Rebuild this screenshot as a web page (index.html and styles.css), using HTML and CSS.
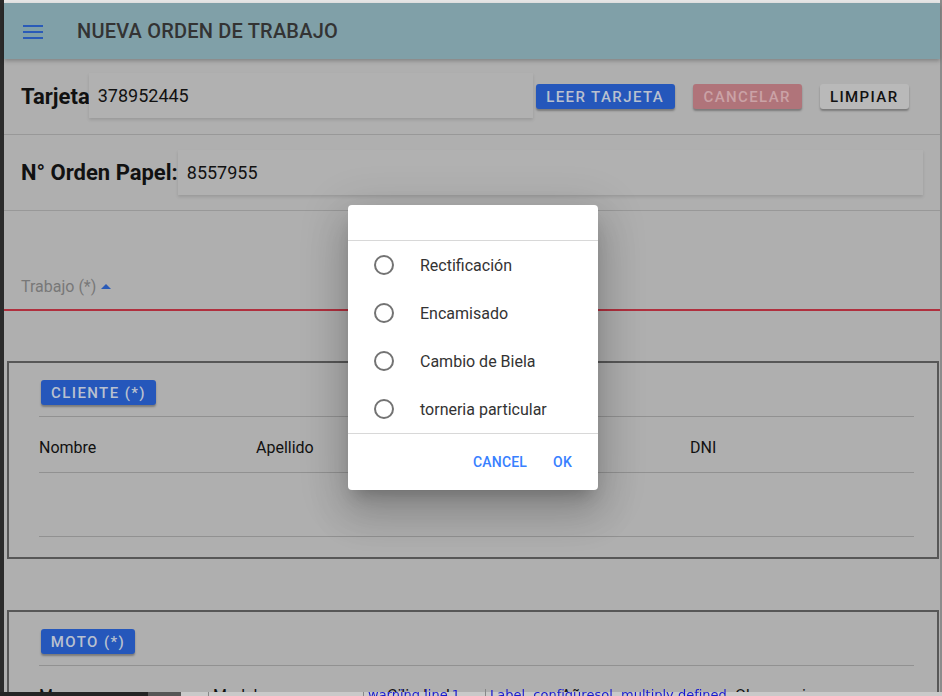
FILE: index.html
```html
<!DOCTYPE html>
<html lang="es">
<head>
<meta charset="utf-8">
<title>Nueva orden de trabajo</title>
<link rel="stylesheet" href="styles.css">
</head>
<body>
<div class="frame">
  <div class="edge"></div>
  <div class="app">
    <div class="topline"></div>
    <header class="toolbar">
      <svg class="menu" width="20" height="14" viewBox="0 0 20 14"><rect x="0" y="0" width="20" height="2"/><rect x="0" y="6" width="20" height="2"/><rect x="0" y="12" width="20" height="2"/></svg>
      <h1 class="title">NUEVA ORDEN DE TRABAJO</h1>
    </header>
    <section class="row row-tarjeta">
      <span class="label">Tarjeta</span>
      <div class="input input-tarjeta">378952445</div>
      <div class="actions">
        <button class="btn btn-blue">LEER TARJETA</button>
        <button class="btn btn-pink">CANCELAR</button>
        <button class="btn btn-light">LIMPIAR</button>
      </div>
    </section>
    <section class="row row-orden">
      <span class="label">N° Orden Papel:</span>
      <div class="input input-orden">8557955</div>
    </section>
    <section class="select-item">
      <span class="select-label">Trabajo (*)</span>
      <span class="caret"></span>
    </section>
    <section class="card card-cliente">
      <button class="btn btn-blue btn-card">CLIENTE (*)</button>
      <div class="grid grid-4 head">
        <span>Nombre</span><span>Apellido</span><span>Teléfono</span><span>DNI</span>
      </div>
      <div class="grid-empty"></div>
    </section>
    <section class="card card-moto">
      <button class="btn btn-blue btn-card">MOTO (*)</button>
      <div class="grid grid-5 head">
        <span>Marca</span><span>Modelo</span><span>Cilindrada</span><span>Año</span><span>Observaciones</span>
      </div>
    </section>
  </div>
</div>

<div class="alert">
  <div class="alert-head"></div>
  <div class="alert-list">
    <div class="radio-item"><span class="radio"></span><span class="radio-label">Rectificación</span></div>
    <div class="radio-item"><span class="radio"></span><span class="radio-label">Encamisado</span></div>
    <div class="radio-item"><span class="radio"></span><span class="radio-label">Cambio de Biela</span></div>
    <div class="radio-item"><span class="radio"></span><span class="radio-label">torneria particular</span></div>
  </div>
  <div class="alert-buttons">
    <span class="alert-btn">CANCEL</span>
    <span class="alert-btn">OK</span>
  </div>
</div>

<div class="statusbar">
  <span class="sb sb-dark"></span>
  <span class="sb sb-mid"></span>
  <span class="sb sb-a"></span>
  <span class="sb sb-b"></span>
  <span class="sb sb-warn">warning line 1</span>
  <span class="sb sb-label">Label. configuresol. multiply defined</span>
</div>
</body>
</html>
```

FILE: styles.css
```css
* { box-sizing: border-box; }
html, body { margin: 0; padding: 0; }
body {
  width: 942px;
  height: 696px;
  overflow: hidden;
  background: #afafaf;
  font-family: Roboto, "Noto Sans", sans-serif;
  color: #111;
}
.frame { display: flex; height: 696px; }
.edge { width: 4px; background: #2b2b2b; flex: none; }
.app {
  width: 938px;
  border-right: 2px solid #8c8c8c;
  display: flex;
  flex-direction: column;
}
.topline { height: 3px; background: #e6e6e6; flex: none; }
.toolbar {
  height: 56px;
  flex: none;
  background: #80a0a8;
  display: flex;
  align-items: center;
  box-shadow: 0 2px 4px rgba(0,0,0,0.25);
  position: relative;
  z-index: 1;
}
.menu { fill: #2a5bb8; margin-left: 19px; margin-top: 1px; }
.title {
  margin: 0 0 0 34px;
  font-size: 20px;
  font-weight: 500;
  letter-spacing: 0.2px;
  color: #333;
}
.row {
  display: flex;
  align-items: center;
  border-bottom: 1px solid #989898;
  height: 76px;
  flex: none;
}
.row-tarjeta { padding: 0 0 0 17px; }
.row-tarjeta .input { margin-bottom: 2px; }
.row-orden { padding: 0 17px 0 17px; }
.label { font-size: 22px; font-weight: 700; color: #111; }
.input {
  height: 45px;
  display: flex;
  align-items: center;
  padding-left: 9px;
  font-size: 18px;
  color: #111;
  background: #b1b1b1;
  box-shadow: 0 2px 3px rgba(0,0,0,0.12);
}
.input-tarjeta { width: 444px; margin-left: -1px; }
.input-orden { flex: 1; margin-left: 0; }
.actions { display: flex; gap: 18px; margin-left: 3px; }
.btn {
  font-family: Roboto, sans-serif;
  font-size: 15px;
  font-weight: 500;
  letter-spacing: 1.4px;
  height: 25px;
  border: none;
  border-radius: 3px;
  padding: 0;
  box-shadow: 0 2px 2px rgba(0,0,0,0.3);
}
.btn-blue { background: #2557bb; color: #b9c1cf; width: 139px; }
.btn-pink { background: #b0747a; color: #caa2a6; width: 109px; }
.btn-light { background: #b9b9b9; color: #111; width: 89px; }
.select-item {
  height: 100px;
  flex: none;
  display: flex;
  align-items: flex-end;
  padding: 0 0 13px 17px;
  border-bottom: 2px solid #b0303e;
}
.select-label { font-size: 16px; color: #787878; }
.caret {
  width: 0; height: 0;
  border-left: 5px solid transparent;
  border-right: 5px solid transparent;
  border-bottom: 5px solid #2a5bb8;
  margin: 0 0 7px 5px;
}
.card {
  margin: 0 1px 0 3px;
  border: 2px solid #575757;
  padding: 17px 23px 0 30px;
}
.card-cliente { margin-top: 50px; height: 198px; flex: none; }
.card-moto { margin-top: 51px; flex: 1; border-bottom: none; }
.btn-card { margin-left: 2px; height: 25px; display: block; }
.card-cliente .btn-card { width: 115px; }
.card-moto .btn-card { width: 94px; }
.grid { display: grid; border-top: 1px solid #919191; margin-top: 11px; font-size: 16px; }
.grid-4 { grid-template-columns: repeat(4, 217px); height: 57px; align-items: start; padding-top: 21px; border-bottom: 1px solid #919191; }
.grid-5 { grid-template-columns: repeat(5, 174px); padding-top: 20px; }
.grid-empty { height: 64px; border-bottom: 1px solid #919191; }

.alert {
  position: absolute;
  left: 348px;
  top: 205px;
  width: 250px;
  height: 285px;
  background: #fff;
  border-radius: 4px;
  box-shadow: 0 11px 15px -7px rgba(0,0,0,0.2), 0 24px 38px 3px rgba(0,0,0,0.14), 0 9px 46px 8px rgba(0,0,0,0.12);
  display: flex;
  flex-direction: column;
}
.alert-head { height: 36px; border-bottom: 1px solid #d8d8d8; }
.alert-list { border-bottom: 1px solid #d8d8d8; }
.radio-item { height: 48px; display: flex; align-items: center; padding-left: 26px; }
.radio {
  width: 20px; height: 20px;
  border: 2px solid #737373;
  border-radius: 50%;
  flex: none;
}
.radio-label { margin-left: 26px; font-size: 16px; color: #333; }
.alert-buttons {
  flex: 1;
  display: flex;
  justify-content: flex-end;
  align-items: center;
  gap: 26px;
  padding-right: 26px;
}
.alert-btn {
  font-size: 14px;
  font-weight: 500;
  color: #3880ff;
  letter-spacing: 0.2px;
}

.statusbar {
  position: fixed;
  left: 0; bottom: 0;
  width: 942px;
  height: 4px;
  background: #c9c9c9;
  display: flex;
  overflow: visible;
}
.sb { display: block; height: 4px; flex: none; }
.sb-dark { width: 148px; background: #242424; }
.sb-mid { width: 33px; background: #565656; }
.sb-a { width: 28px; border-right: 1px solid #888; }
.sb-b { width: 155px; border-right: 1px solid #888; }
.sb-warn, .sb-label {
  overflow: hidden;
  font-family: "DejaVu Sans", sans-serif;
  font-size: 13px;
  line-height: 12px;
  color: #1a1ad0;
  padding-left: 4px;
  position: relative;
  top: -3px;
  height: 7px;
}
.sb-warn { width: 122px; border-right: 1px solid #888; }
.sb-label { width: 260px; }
```
